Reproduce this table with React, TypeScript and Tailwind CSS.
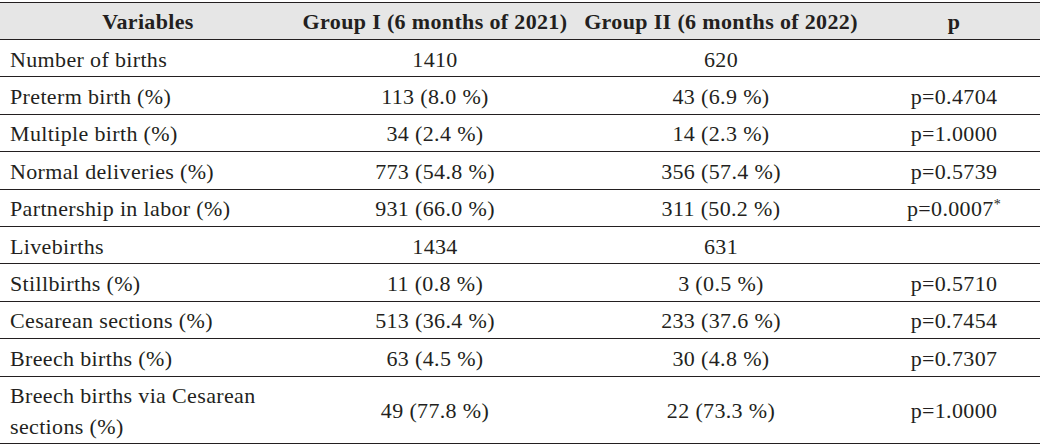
import React from 'react';

type Row = {
  label: React.ReactNode;
  g1: string;
  g2: string;
  p?: string;
  tall?: boolean;
};

const rows: Row[] = [
  { label: 'Number of births', g1: '1410', g2: '620' },
  { label: 'Preterm birth (%)', g1: '113 (8.0 %)', g2: '43 (6.9 %)', p: 'p=0.4704' },
  { label: 'Multiple birth (%)', g1: '34 (2.4 %)', g2: '14 (2.3 %)', p: 'p=1.0000' },
  { label: 'Normal deliveries (%)', g1: '773 (54.8 %)', g2: '356 (57.4 %)', p: 'p=0.5739' },
  { label: 'Partnership in labor (%)', g1: '931 (66.0 %)', g2: '311 (50.2 %)', p: 'p=0.0007*' },
  { label: 'Livebirths', g1: '1434', g2: '631' },
  { label: 'Stillbirths (%)', g1: '11 (0.8 %)', g2: '3 (0.5 %)', p: 'p=0.5710' },
  { label: 'Cesarean sections (%)', g1: '513 (36.4 %)', g2: '233 (37.6 %)', p: 'p=0.7454' },
  { label: 'Breech births (%)', g1: '63 (4.5 %)', g2: '30 (4.8 %)', p: 'p=0.7307' },
  {
    label: 'Breech births via Cesarean sections (%)',
    g1: '49 (77.8 %)',
    g2: '22 (73.3 %)',
    p: 'p=1.0000',
    tall: true,
  },
];

const cols = 'grid grid-cols-[296px_278px_294px_172px]';

const App = () => {
  return (
    <div
      className="w-[1044px] h-[447px] bg-white text-[#231f20] pt-[2px]"
      style={{ fontFamily: '"Liberation Serif", "Times New Roman", serif' }}
    >
      <div className="w-[1040px] border-t border-[#231f20] tracking-[0.35px]">
        {/* header */}
        <div className={`${cols} h-[37px] bg-[#e6e6e6] border-b border-[#231f20] font-bold text-[22px] items-center`}>
          <div className="text-center">Variables</div>
          <div className="text-center">Group I (6 months of 2021)</div>
          <div className="text-center">Group II (6 months of 2022)</div>
          <div className="text-center">p</div>
        </div>

        {rows.map((r, i) => (
          <div
            key={i}
            className={`${cols} ${r.tall ? 'h-[67px]' : 'h-[37.4px]'} border-b border-[#231f20] text-[22px] items-center pt-[2px]`}
          >
            <div className={`pl-[10px] pr-[30px] ${r.tall ? 'leading-[31px]' : ''}`}>{r.label}</div>
            <div className="text-center">{r.g1}</div>
            <div className="text-center">{r.g2}</div>
            <div className="text-center">
              {r.p && r.p.endsWith('*') ? (
                <>
                  {r.p.slice(0, -1)}
                  <span className="text-[14px] align-top relative top-[2px]">*</span>
                </>
              ) : (
                r.p
              )}
            </div>
          </div>
        ))}
      </div>
    </div>
  );
};

export default App;
